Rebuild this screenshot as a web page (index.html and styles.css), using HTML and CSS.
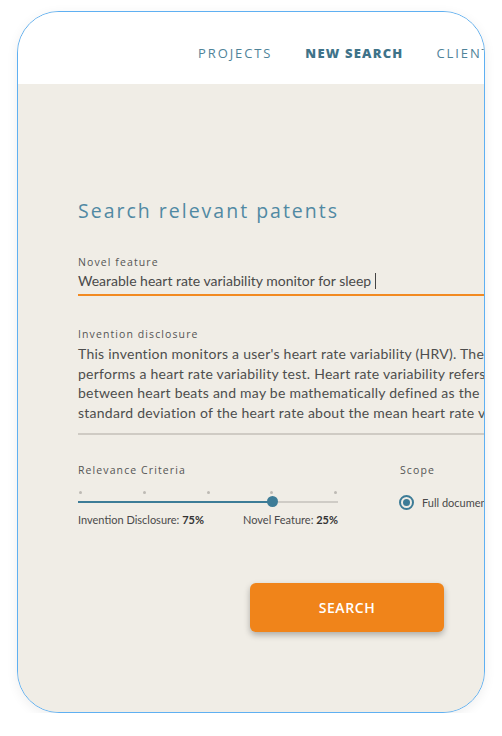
FILE: index.html
```html
<!DOCTYPE html>
<html>
<head>
<meta charset="utf-8">
<link rel="stylesheet" href="styles.css">
</head>
<body>
<div class="frame">
  <header class="topbar">
    <nav class="nav">
      <span class="nav-item">PROJECTS</span>
      <span class="nav-item active">NEW SEARCH</span>
      <span class="nav-item">CLIENTS</span>
    </nav>
  </header>
  <main class="main">
    <div class="content">
      <h1 class="title">Search relevant patents</h1>
      <div class="field">
        <div class="label">Novel feature</div>
        <div class="input orange">Wearable heart rate variability monitor for sleep <span class="caret"></span></div>
      </div>
      <div class="field second">
        <div class="label">Invention disclosure</div>
        <div class="textarea">This invention monitors a user's heart rate variability (HRV). The device<br>performs a heart rate variability test. Heart rate variability refers to the variation<br>between heart beats and may be mathematically defined as the<br>standard deviation of the heart rate about the mean heart rate value.</div>
      </div>
      <div class="options">
        <div class="relevance">
          <div class="label">Relevance Criteria</div>
          <div class="slider">
            <div class="dots">
              <span class="dot"></span><span class="dot"></span><span class="dot"></span><span class="dot"></span><span class="dot"></span>
            </div>
            <div class="track">
              <div class="fill"></div>
              <div class="thumb"></div>
            </div>
          </div>
          <div class="slider-labels">
            <span>Invention Disclosure: <b>75%</b></span>
            <span>Novel Feature: <b>25%</b></span>
          </div>
        </div>
        <div class="scope">
          <div class="label">Scope</div>
          <div class="radio-row">
            <span class="radio"></span>
            <span class="radio-text">Full document</span>
          </div>
        </div>
      </div>
      <button class="search-btn">SEARCH</button>
    </div>
  </main>
</div>
</body>
</html>
```

FILE: styles.css
```css
html, body {
  margin: 0;
  padding: 0;
  background: #ffffff;
}
body {
  padding: 11px 0 0 17px;
  font-family: "Lato", "Open Sans", sans-serif;
}
.frame {
  width: 466px;
  height: 700px;
  border: 1px solid #5fb0f2;
  border-radius: 42px;
  overflow: hidden;
  background: #f0ede6;
  box-shadow: 0 3px 12px rgba(0, 0, 0, 0.07);
  display: flex;
  flex-direction: column;
}
.topbar {
  height: 72px;
  background: #ffffff;
  flex-shrink: 0;
}
.nav {
  display: flex;
  gap: 33px;
  padding: 33px 0 0 180px;
  white-space: nowrap;
  width: 600px;
}
.nav-item {
  font-family: "Open Sans", sans-serif;
  font-size: 13px;
  letter-spacing: 1.9px;
  color: #4f8399;
  line-height: 16px;
  flex-shrink: 0;
}
.nav-item.active {
  font-weight: 800;
  color: #3f7389;
  letter-spacing: 1.2px;
}
.main {
  flex: 1;
  background: #f0ede6;
  padding: 115px 0 0 60px;
}
.content {
  width: 620px;
}
.title {
  margin: 0;
  font-family: "Open Sans", sans-serif;
  font-weight: 400;
  font-size: 19.5px;
  letter-spacing: 2px;
  line-height: 24px;
  color: #5089a3;
}
.field {
  margin-top: 32px;
}
.field.second {
  margin-top: 31px;
}
.label {
  font-family: "Open Sans", sans-serif;
  font-size: 10.5px;
  letter-spacing: 1.1px;
  line-height: 14px;
  color: #555555;
}
.input {
  font-size: 14px;
  line-height: 18px;
  color: #4a4a4a;
  padding: 3px 0 4px;
  white-space: nowrap;
}
.input.orange {
  border-bottom: 2px solid #f28a22;
}
.caret {
  display: inline-block;
  width: 1px;
  height: 16px;
  background: #444;
  vertical-align: -3px;
}
.textarea {
  margin-top: 3px;
  font-size: 14px;
  letter-spacing: 0.25px;
  line-height: 19.5px;
  color: #4d4d4d;
  white-space: nowrap;
  padding-bottom: 11px;
  border-bottom: 2px solid #cfcbc4;
}
.options {
  display: flex;
  margin-top: 28px;
}
.relevance {
  width: 260px;
}
.scope {
  margin-left: 62px;
}
.slider {
  margin-top: 14px;
  position: relative;
}
.dots {
  display: flex;
  justify-content: space-between;
  padding: 0 1px;
  height: 4px;
}
.dot {
  width: 3px;
  height: 3px;
  border-radius: 50%;
  background: #bdbab4;
}
.track {
  margin-top: 6px;
  height: 2px;
  background: #cfccc6;
  position: relative;
}
.fill {
  width: 195px;
  height: 2px;
  background: #3d7c97;
}
.thumb {
  position: absolute;
  left: 189px;
  top: -5px;
  width: 11px;
  height: 11px;
  border-radius: 50%;
  background: #3d7c97;
}
.slider-labels {
  display: flex;
  justify-content: space-between;
  margin-top: 10px;
  font-size: 11px;
  line-height: 14px;
  color: #4a4a4a;
}
.slider-labels b {
  font-weight: 700;
  color: #333;
}
.radio-row {
  display: flex;
  align-items: center;
  margin-top: 18px;
  white-space: nowrap;
}
.radio {
  width: 11px;
  height: 11px;
  border: 2px solid #3d7c97;
  border-radius: 50%;
  position: relative;
  margin-left: -1px;
  box-sizing: content-box;
}
.radio::after {
  content: "";
  position: absolute;
  left: 2px;
  top: 2px;
  width: 7px;
  height: 7px;
  border-radius: 50%;
  background: #3d7c97;
}
.radio-text {
  margin-left: 8px;
  font-size: 11px;
  color: #4a4a4a;
}
.search-btn {
  display: block;
  margin: 56px 0 0 172px;
  width: 194px;
  height: 49px;
  border: none;
  border-radius: 6px;
  background: #f0841a;
  color: #ffffff;
  font-family: "Open Sans", sans-serif;
  font-weight: 600;
  font-size: 14px;
  letter-spacing: 0.6px;
  box-shadow: 0 3px 6px rgba(0, 0, 0, 0.28);
}
```
